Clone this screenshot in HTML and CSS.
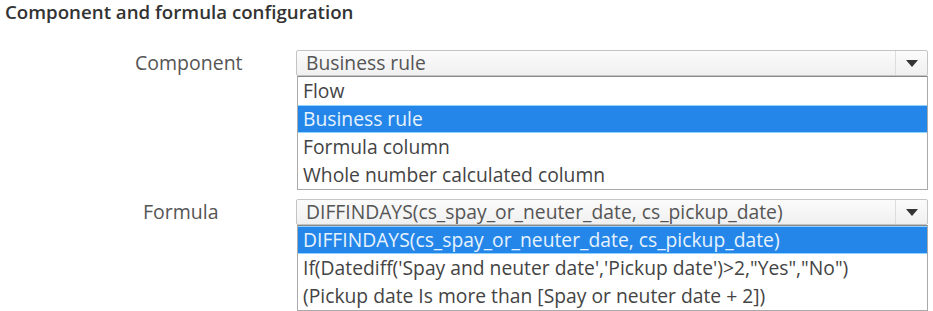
FILE: index.html
```html
<!DOCTYPE html>
<html>
<head>
<meta charset="utf-8">
<link rel="stylesheet" href="styles.css">
</head>
<body>
<div class="page">
  <h1 class="title">Component and formula configuration</h1>
  <div class="form">
    <div class="label label-component">Component</div>
    <div class="field">
      <div class="select">
        <span class="select-value">Business rule</span>
        <span class="select-btn"><svg width="12" height="7" viewBox="0 0 12 7"><path d="M0 0H12L6 7Z" fill="#333"/></svg></span>
      </div>
      <ul class="list">
        <li class="item">Flow</li>
        <li class="item selected">Business rule</li>
        <li class="item">Formula column</li>
        <li class="item">Whole number calculated column</li>
      </ul>
    </div>
    <div class="label label-formula">Formula</div>
    <div class="field">
      <div class="select">
        <span class="select-value">DIFFINDAYS(cs_spay_or_neuter_date, cs_pickup_date)</span>
        <span class="select-btn"><svg width="12" height="7" viewBox="0 0 12 7"><path d="M0 0H12L6 7Z" fill="#333"/></svg></span>
      </div>
      <ul class="list">
        <li class="item selected">DIFFINDAYS(cs_spay_or_neuter_date, cs_pickup_date)</li>
        <li class="item">If(Datediff('Spay and neuter date','Pickup date')&gt;2,"Yes","No")</li>
        <li class="item">(Pickup date Is more than [Spay or neuter date + 2])</li>
      </ul>
    </div>
  </div>
</div>
</body>
</html>
```
FILE: styles.css
```css
html, body {
  margin: 0;
  padding: 0;
  background: #fff;
}
.page {
  font-family: "Open Sans", "Noto Sans", sans-serif;
  color: #444;
  padding: 0 0 0 5px;
}
.title {
  margin: 0;
  font-size: 18.7px;
  font-weight: 600;
  color: #333;
  line-height: 24px;
}
.form {
  display: grid;
  grid-template-columns: 291px 632px;
  row-gap: 9px;
  margin-top: 26px;
}
.label {
  font-size: 19.5px;
  color: #555;
  line-height: 26px;
}
.label-component {
  padding-left: 130px;
}
.label-formula {
  padding-left: 138px;
}
.field {
  display: flex;
  flex-direction: column;
}
.select {
  display: flex;
  align-items: center;
  height: 24px;
  border: 1px solid #c4c4c4;
  border-radius: 2px;
  background: linear-gradient(#fbfbfb, #f0f0f0);
}
.select-value {
  flex: 1;
  font-size: 19.3px;
  line-height: 26px;
  padding-left: 9px;
  color: #555;
  white-space: nowrap;
}
.select-btn {
  align-self: stretch;
  width: 31px;
  border-left: 1px solid #ddd;
  display: flex;
  align-items: center;
  justify-content: center;
}
.list {
  list-style: none;
  margin: 0 0 0 1px;
  padding: 0;
  border: 1px solid #aaa;
  border-top: 1px solid #888;
  background: #fff;
}
.item {
  height: 28px;
  line-height: 28px;
  font-size: 19.3px;
  padding-left: 5px;
  color: #444;
  white-space: nowrap;
}
.item.selected {
  background: #2486e8;
  color: #e6f3ff;
  box-shadow: inset 0 1px 0 #8fd3ff, inset 0 -1px 0 #8fd3ff;
}
```
